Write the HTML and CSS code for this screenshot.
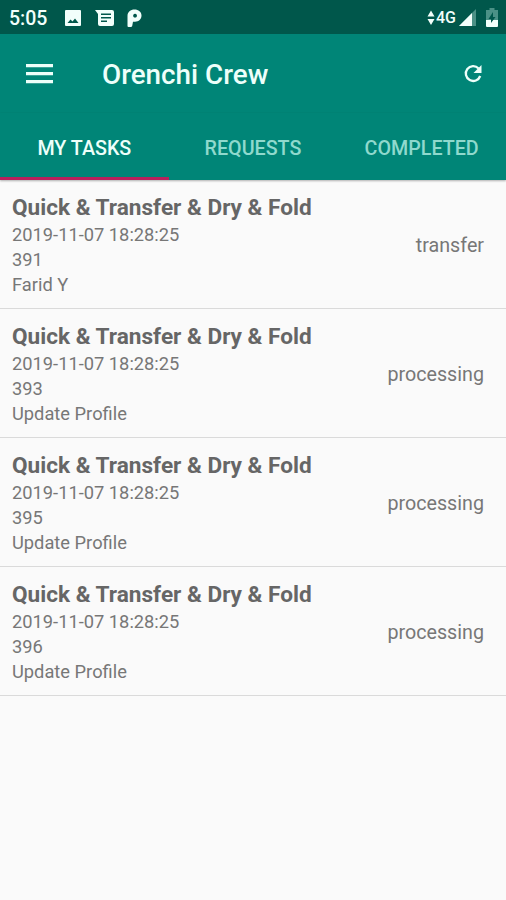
FILE: index.html
```html
<!DOCTYPE html>
<html lang="en">
<head>
    <meta charset="UTF-8">
    <meta name="viewport" content="width=device-width, initial-scale=1.0">
    <title>Orenchi Crew</title>
    <link rel="stylesheet" href="styles.css">
</head>
<body>
    <!-- Status bar -->
    <div class="status-bar">
        <span class="clock">5:05</span>
        <svg class="icon-image" width="18" height="18" viewBox="0 0 18 18">
            <path fill="#f2fffb" fill-rule="evenodd" d="M2 1h14q1 0 1 1v14q0 1-1 1H2q-1 0-1-1V2q0-1 1-1zM3.500 14h11l-3.500-4.500-2.500 3-2-2z"/>
        </svg>
        <svg class="icon-message" width="20" height="18" viewBox="0 0 20 18">
            <path fill="#f2fffb" fill-rule="evenodd" d="M0 1h17q2 0 2 2v12q0 2-2 2H5q-2 0-2-2V5zM6 4.500v1.600h10V4.500zM6 8v1.600h10V8zM6 11.500v1.600h6v-1.600z"/>
        </svg>
        <svg class="icon-p" width="16" height="18" viewBox="0 0 16 18">
            <path fill="#f2fffb" fill-rule="evenodd" d="M.500 17V7C.500 3 3.500.500 7.500.500c4 0 7 2.500 7 6 0 3.700-2.700 6.200-6.500 6.200H6L5.200 17q-.2 1-1.500 1H1.500q-1 0-1-1zM8 4.800a1.900 1.900 0 1 0 .1 0z"/>
        </svg>
        <div class="signal">
            <svg width="8" height="16" viewBox="0 0 8 16">
                <path fill="#f2fffb" d="M4 .500l3.500 6h-7zM4 15l3.500-6h-7z"/>
            </svg>
            <span class="network">4G</span>
            <svg class="icon-cell" width="17" height="18" viewBox="0 0 17 18">
                <path fill="#4b9186" d="M17 0v17H0z"/>
                <path fill="#f2fffb" d="M13 4v13H0z"/>
            </svg>
            <svg class="icon-battery" width="12" height="19" viewBox="0 0 12 19">
                <path fill="#4b9186" d="M3.500 0h5v2H12v11H0V2h3.500z"/>
                <path fill="#f2fffb" d="M0 12h12v6q0 1-1 1H1q-1 0-1-1z"/>
                <path fill="#00574b" d="M7 4L2.500 11H5v4l4.500-6H7z"/>
            </svg>
        </div>
    </div>

    <!-- App bar -->
    <header class="app-bar">
        <svg class="menu" width="27" height="20" viewBox="0 0 27 20">
            <path fill="#edfffa" d="M0 0h27v3.300H0zM0 8h27v3.300H0zM0 16h27v3.300H0z"/>
        </svg>
        <h1>Orenchi Crew</h1>
        <svg class="refresh" width="20" height="20" viewBox="0 0 20 20">
            <path fill="none" stroke="#edfffa" stroke-width="2.300" d="M15.600 4.500A7.400 7.400 0 1 0 17.200 12"/>
            <path fill="#edfffa" d="M18.500 1v8h-8z"/>
        </svg>
    </header>

    <!-- Tabs -->
    <nav class="tabs">
        <div class="tab active">MY TASKS</div>
        <div class="tab">REQUESTS</div>
        <div class="tab">COMPLETED</div>
    </nav>

    <!-- Task list -->
    <main class="task-list">
        <div class="task">
            <div class="details">
                <h2>Quick &amp; Transfer &amp; Dry &amp; Fold</h2>
                <p>2019-11-07 18:28:25</p>
                <p>391</p>
                <p>Farid Y</p>
            </div>
            <div class="status">transfer</div>
        </div>
        <div class="task">
            <div class="details">
                <h2>Quick &amp; Transfer &amp; Dry &amp; Fold</h2>
                <p>2019-11-07 18:28:25</p>
                <p>393</p>
                <p>Update Profile</p>
            </div>
            <div class="status">processing</div>
        </div>
        <div class="task">
            <div class="details">
                <h2>Quick &amp; Transfer &amp; Dry &amp; Fold</h2>
                <p>2019-11-07 18:28:25</p>
                <p>395</p>
                <p>Update Profile</p>
            </div>
            <div class="status">processing</div>
        </div>
        <div class="task">
            <div class="details">
                <h2>Quick &amp; Transfer &amp; Dry &amp; Fold</h2>
                <p>2019-11-07 18:28:25</p>
                <p>396</p>
                <p>Update Profile</p>
            </div>
            <div class="status">processing</div>
        </div>
    </main>
</body>
</html>
```
FILE: styles.css
```css
* {
    box-sizing: border-box;
}

body {
    font-family: Roboto, sans-serif;
    margin: 0;
    min-height: 100vh;
    background-color: #fafafa;
    color: #777;
}

h1, h2, p {
    margin: 0;
}

svg {
    display: block;
    flex-shrink: 0;
}

.status-bar {
    display: flex;
    align-items: center;
    height: 34px;
    padding: 1px 8px 0 9px;
    background-color: #00574b;
    color: #f2fffb;
}

.clock {
    width: 55px;
    padding-top: 1px;
    font-size: 19.5px;
    font-weight: 500;
}

.icon-message {
    margin-left: 13px;
}

.icon-p {
    margin-left: 12px;
}

.signal {
    display: flex;
    align-items: center;
    margin-left: auto;
}

.network {
    width: 23px;
    margin-left: 1px;
    font-size: 16px;
    font-weight: 500;
}

.icon-battery {
    margin-left: 10px;
}

.app-bar {
    display: flex;
    align-items: center;
    height: 79px;
    padding: 0 23px 0 26px;
    background-color: #008577;
    color: #edfffa;
}

.app-bar h1 {
    margin-left: 49px;
    padding-top: 2px;
    font-size: 27.8px;
    font-weight: 500;
}

.refresh {
    margin-left: auto;
}

.tabs {
    display: grid;
    grid-template-columns: repeat(3, 1fr);
    height: 67px;
    background-color: #008577;
    box-shadow: 0 1px 2px rgba(0, 0, 0, 0.3);
}

.tab {
    display: flex;
    align-items: center;
    justify-content: center;
    padding-top: 7px;
    border-bottom: 3px solid transparent;
    font-size: 19.7px;
    font-weight: 500;
    color: #8fd9cd;
}

.tab.active {
    border-bottom-color: #b8205c;
    color: #edfffa;
}

.task {
    display: flex;
    align-items: center;
    justify-content: space-between;
    height: 129px;
    padding: 3px 22px 0 12px;
    border-bottom: 1px solid #dadada;
}

.details {
    padding-bottom: 1px;
}

.details h2 {
    font-size: 22.6px;
    font-weight: 700;
    line-height: 29px;
    color: #666;
}

.details p {
    font-size: 18.3px;
    line-height: 25px;
}

.status {
    font-size: 19.7px;
}
```
